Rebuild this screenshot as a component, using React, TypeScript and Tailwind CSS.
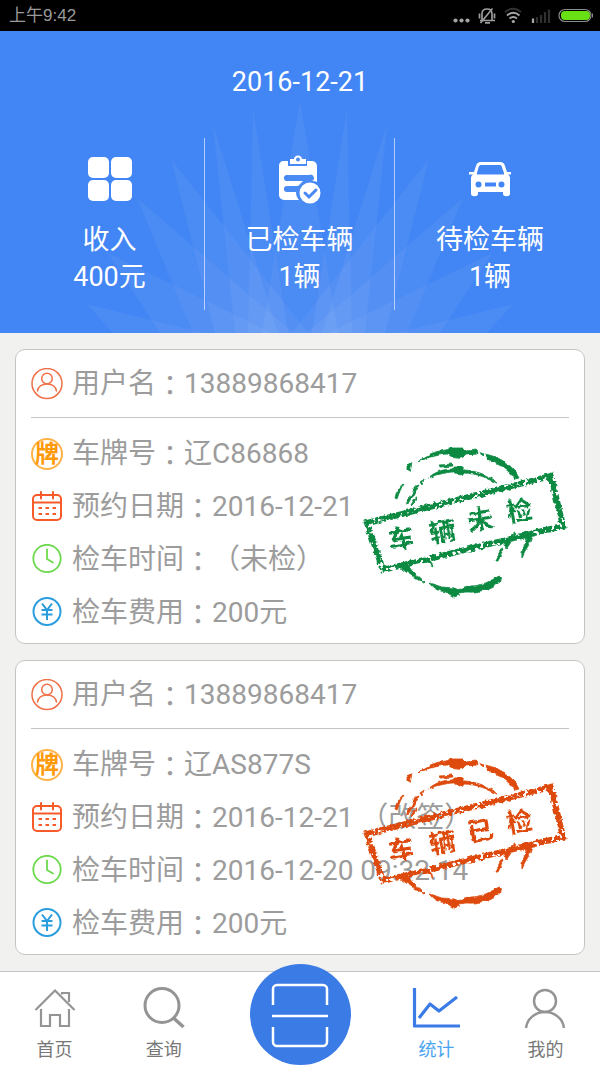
import type { ReactNode } from "react";

type Inspection = {
  id: string;
  phone: string;
  plate: string;
  bookedFor: string;
  inspectedAt: string;
  fee: string;
  stampText: string;
  stampClass: string;
};

const inspections: Inspection[] = [
  {
    id: "c86868",
    phone: "13889868417",
    plate: "辽C86868",
    bookedFor: "2016-12-21",
    inspectedAt: "（未检）",
    fee: "200元",
    stampText: "车辆未检",
    stampClass: "text-[#0d8a43]",
  },
  {
    id: "as877s",
    phone: "13889868417",
    plate: "辽AS877S",
    bookedFor: "2016-12-21 （改签）",
    inspectedAt: "2016-12-20 09:32:14",
    fee: "200元",
    stampText: "车辆已检",
    stampClass: "text-[#de4a0a]",
  },
];

function StatusBar() {
  return (
    <div className="flex h-[31px] items-center justify-between bg-black pl-[9px] text-[#9a9a9a]">
      <span className="font-['Liberation_Sans','Noto_Sans_CJK_SC',sans-serif] text-[17px] leading-6">上午9:42</span>
      <svg width="147" height="24" viewBox="0 0 147 24" fill="none" aria-hidden>
        <g fill="#a3a3a3">
          <circle cx="2.500" cy="16.500" r="2.100" />
          <circle cx="8.500" cy="16.500" r="2.100" />
          <circle cx="14.500" cy="16.500" r="2.100" />
        </g>
        <g stroke="#9c9c9c" strokeWidth="1.700">
          <path d="M27 16.500h15M29 16v-6c0-3 2-5 5-5s5 2 5 5v6M27.500 19 39.500 4.500M32 18.800h5" />
          <path d="M26.500 9.500v5M41.500 9.500v5" />
        </g>
        <g strokeWidth="1.800">
          <path d="M52 8c5-4 11-4 16 0" stroke="#333" />
          <path d="M54 11.500c4-3.500 8.500-3.500 12.500 0M56.500 14.500c2.500-2 5-2 7.500 0" stroke="#a8a8a8" />
          <circle cx="60.300" cy="17.500" r="1.600" fill="#a8a8a8" />
        </g>
        <path d="M80 14.500v4.500" stroke="#a8a8a8" strokeWidth="2.200" />
        <path d="M84 13v6M88 11v8M92 8v11M96 5.500V19" stroke="#303030" strokeWidth="2.200" />
        <rect x="106" y="5.500" width="32" height="12" rx="6" stroke="#8a8a8a" strokeWidth="1.200" />
        <rect x="108" y="7" width="29" height="9" rx="4" fill="#69e015" />
        <path d="M139.500 9.500v4" stroke="#8a8a8a" />
      </svg>
    </div>
  );
}

function Rays() {
  const half = (
    <>
      <path d="M168 8 163 233h40z" />
      <path d="M128 24 150 233h43z" />
      <path d="M86 59 130 233h93z" />
      <path d="M52 98 108 233h100z" />
      <path d="M23 153 75 233h112z" />
      <path d="M2 204 28 233h90z" />
    </>
  );

  return (
    <svg
      className="absolute bottom-0 left-1/2 -translate-x-1/2"
      width="430"
      height="233"
      viewBox="0 0 430 233"
      fill="#fff"
      fillOpacity=".05"
      aria-hidden
    >
      <path d="M215 0 177 233h76z" />
      {half}
      <g transform="matrix(-1 0 0 1 430 0)">{half}</g>
    </svg>
  );
}

function GridIcon() {
  return (
    <svg width="48" height="48" viewBox="0 0 48 48" fill="#fff" aria-hidden>
      <rect x="2" y="1" width="21" height="21" rx="5" />
      <rect x="25" y="1" width="21" height="21" rx="5" />
      <rect x="2" y="24" width="21" height="21" rx="5" />
      <rect x="25" y="24" width="21" height="21" rx="5" />
    </svg>
  );
}

function ClipboardIcon() {
  return (
    <svg className="overflow-visible" width="48" height="48" viewBox="0 0 48 48" aria-hidden>
      <path
        fill="#fff"
        fillRule="evenodd"
        d="M7 5h5v5h19V5h5a5 5 0 0 1 5 5v16a13 13 0 0 0-5-1 3 3 0 0 0-3-6H11a3 3 0 0 0 0 6h16l-5 5H11a2.500 2.500 0 0 0 0 6h9c0 3 1 6 3 8H8a5 5 0 0 1-5-5V10a5 5 0 0 1 4-5z"
      />
      <path
        fill="#fff"
        fillRule="evenodd"
        d="M14 8V3h4c0-2 2-3.500 4-3.500S26 1 26 3h4v5zm8-6.500a2 2 0 1 0 0 4 2 2 0 0 0 0-4z"
      />
      <circle cx="34" cy="37" r="10.500" fill="#fff" />
      <path d="m29 37 4 4 7-7" fill="none" stroke="#4788f4" strokeWidth="3" strokeLinecap="round" />
    </svg>
  );
}

function CarIcon() {
  return (
    <svg width="48" height="48" viewBox="0 0 48 48" aria-hidden>
      <path
        fill="#fff"
        fillRule="evenodd"
        d="M15 6h19c3 0 4 1 5 4l2 6h4v2.500h-3c1.500 1 2 2 2 4V38c0 3-7 3-7 0v-2H12v2c0 3-7 3-7 0V22.500c0-2 .5-3 2-4H3V16h5l2-6c1-3 2-4 5-4zm1 3c-2 0-3 .5-3.500 2.500L11 17c-.3 1 0 1.500 1 1.500h25c1 0 1.300-.5 1-1.500l-2-5.500C35.500 9.500 35 9 33 9zM12.500 25.500a3 3 0 1 0 0 6 3 3 0 0 0 0-6zm23 0a3 3 0 1 0 0 6 3 3 0 0 0 0-6zM19 26.500v4h11v-4z"
      />
    </svg>
  );
}

function Stat({ icon, label, value }: { icon: ReactNode; label: string; value: string }) {
  return (
    <div className="flex flex-col items-center pt-[18px] pb-[14px] text-[27px] leading-[37px]">
      {icon}
      <p className="mt-[18px]">{label}</p>
      <p>{value}</p>
    </div>
  );
}

function Summary() {
  return (
    <header className="relative bg-[#4285f4] px-[15px] pt-[33px] pb-[23px] text-white">
      <Rays />
      <div className="relative">
        <h1 className="mb-[37px] text-center text-[27px] leading-[37px]">2016-12-21</h1>
        <div className="grid grid-cols-3 divide-x divide-white/60">
          <Stat icon={<GridIcon />} label="收入" value="400元" />
          <Stat icon={<ClipboardIcon />} label="已检车辆" value="1辆" />
          <Stat icon={<CarIcon />} label="待检车辆" value="1辆" />
        </div>
      </div>
    </header>
  );
}

function UserIcon() {
  return (
    <svg width="32" height="32" viewBox="0 0 32 32" fill="none" stroke="#f07048" strokeWidth="1.500" aria-hidden>
      <circle cx="16" cy="15.500" r="15" />
      <circle cx="16" cy="10.500" r="5.300" />
      <path d="M6.500 23c1-5 5-7 9.500-7s8.500 2 9.500 7" strokeLinecap="round" />
    </svg>
  );
}

function PlateIcon() {
  return (
    <span
      className="flex size-8 items-center justify-center rounded-full border-2 border-[#ffb347] text-[24px] leading-none font-bold text-[#ff9a0a]"
      aria-hidden
    >
      牌
    </span>
  );
}

function CalendarIcon() {
  return (
    <svg width="32" height="32" viewBox="0 0 32 32" fill="none" stroke="#f85a2a" strokeWidth="2" aria-hidden>
      <rect x="2" y="4" width="28" height="25" rx="4" />
      <path d="M2 11.500h28" />
      <path d="M10 1v6.500M22 1v6.500" strokeLinecap="round" />
      <path d="M7.500 17h3.500M14.500 17H18M21.500 17H25M7.500 23h3.500M14.500 23H18M21.500 23H25" />
    </svg>
  );
}

function ClockIcon() {
  return (
    <svg width="32" height="32" viewBox="0 0 32 32" fill="none" stroke="#6cd94c" strokeWidth="1.800" aria-hidden>
      <circle cx="16" cy="14.500" r="13.700" />
      <path d="M16 5.500V15l6 3.500" strokeLinecap="round" />
    </svg>
  );
}

function YuanIcon() {
  return (
    <svg width="32" height="32" viewBox="0 0 32 32" fill="none" stroke="#2a9ddf" strokeWidth="2" aria-hidden>
      <circle cx="16" cy="14.500" r="13.500" />
      <path d="m11 6.500 5 6.500 5-6.500M16 13v10M10.500 13h11M10.500 17.500h11" />
    </svg>
  );
}

function Field({ icon, label, value }: { icon: ReactNode; label: string; value: string }) {
  return (
    <>
      {icon}
      <span className="flex pt-px whitespace-nowrap">
        {label}
        <span className="font-['Noto_Sans_CJK_TC',sans-serif]">：</span>
        {value}
      </span>
    </>
  );
}

function Stamp({ id, text, className }: { id: string; text: string; className: string }) {
  const inkId = `ink-${id}`;
  const roughId = `rough-${id}`;
  const spots = [
    [47, 113],
    [88, 106],
    [126, 94],
    [165, 85],
  ];

  return (
    <svg
      className={`pointer-events-none absolute top-[85px] right-2 ${className}`}
      width="220"
      height="170"
      viewBox="0 0 220 170"
      role="img"
      aria-label={text}
    >
      <defs>
        <filter id={inkId} x="-5%" y="-5%" width="110%" height="110%">
          <feTurbulence type="fractalNoise" baseFrequency=".25" numOctaves="2" seed="7" result="noise" />
          <feDisplacementMap in="SourceGraphic" in2="noise" scale="4" xChannelSelector="R" yChannelSelector="G" result="rough" />
          <feColorMatrix in="noise" type="matrix" values="0 0 0 0 0  0 0 0 0 0  0 0 0 0 0  0 0 -14 0 9.400" result="holes" />
          <feComposite in="rough" in2="holes" operator="in" />
        </filter>
        <filter id={roughId} x="-5%" y="-5%" width="110%" height="110%">
          <feTurbulence type="fractalNoise" baseFrequency=".16" numOctaves="2" seed="3" result="noise" />
          <feDisplacementMap in="SourceGraphic" in2="noise" scale="4" xChannelSelector="R" yChannelSelector="G" />
        </filter>
      </defs>
      <path
        d="m11 88 184-47 12 50-180 44z"
        fill="none"
        stroke="currentColor"
        strokeWidth="6"
        filter={`url(#${inkId})`}
      />
      <g fill="currentColor" stroke="currentColor" strokeWidth=".8" filter={`url(#${roughId})`}>
        <g fontSize="26" fontWeight="700" textAnchor="middle" stroke="none">
          {text.split("").map((char, i) => (
            <text key={char} x={spots[i][0]} y={spots[i][1]} transform={`rotate(-10 ${spots[i][0]} ${spots[i][1]})`}>
              {char}
            </text>
          ))}
        </g>
        <path d="M62 27c8-7 17-11 28-12l3-2h14l3 3 11-1 1 4-13 1c-3 5-11 4-16-1-11 0-20 3-31 8z" />
        <path d="m124 17 4 2-2 2zM129 19c15 3 28 11 34 24l-4 1c-6-9-16-15-27-19z" />
        <path d="m51 31 5-3-2 9-3-2zM39 63c1-6 4-11 9-15-3 5-5 10-7 16z" />
        <path d="M72 43c7-6 15-9 24-9l3-2h8l1 3c13 1 25 5 34 13-10-4-20-10-35-10-2 3-8 2-9-1-9 0-17 3-26 6zM84 30l12-1 1 2-12 1z" />
        <path d="m64 47 4-3-2 6zM50 69l10-18 3-1-10 18zM55 70l6-10-2 6z" />
        <path d="M41 131c6-2 12-1 14 2 3 6 8 9 13 14-9-3-17-10-27-16zM67 123c5 1 8 4 10 8l-9-5z" />
        <path d="m73 148 13 4 12 1c5 3 12 0 17-2 11 0 19-5 28-10l3 1-2 5c-10 7-21 11-33 10l-9 1 2 2-6 2-8-5-5-1c-5-1-9-4-12-8z" />
        <path d="m139 126 5-10 4-2-6 12zM148 108l7-8 5-2-10 15zM166 99l10-1c0 6-3 12-7 18l-3 6c-1-7 3-11 4-17z" />
      </g>
    </svg>
  );
}

function InspectionCard({ item }: { item: Inspection }) {
  return (
    <article className="relative rounded-[10px] border border-[#c4c4c4] bg-white px-[15px] pb-1 text-[28px] leading-9 text-[#9c9c9c]">
      <div className="flex h-[68px] items-center gap-[9px] border-b border-[#c4c4c4]">
        <Field icon={<UserIcon />} label="用户名" value={item.phone} />
      </div>
      <ul className="pt-[9px]">
        <li className="flex h-[53px] items-center gap-[9px]">
          <Field icon={<PlateIcon />} label="车牌号" value={item.plate} />
        </li>
        <li className="flex h-[53px] items-center gap-[9px]">
          <Field icon={<CalendarIcon />} label="预约日期" value={item.bookedFor} />
        </li>
        <li className="flex h-[53px] items-center gap-[9px]">
          <Field icon={<ClockIcon />} label="检车时间" value={item.inspectedAt} />
        </li>
        <li className="flex h-[53px] items-center gap-[9px]">
          <Field icon={<YuanIcon />} label="检车费用" value={item.fee} />
        </li>
      </ul>
      <Stamp id={item.id} text={item.stampText} className={item.stampClass} />
    </article>
  );
}

function Tab({ label, active, children }: { label: string; active?: boolean; children: ReactNode }) {
  return (
    <a
      href="#"
      aria-current={active ? "page" : undefined}
      className={`flex flex-2 flex-col items-center pt-3 text-[18px] leading-7 ${active ? "text-[#4aa3ef]" : "text-[#777]"}`}
    >
      <svg width="48" height="48" viewBox="0 0 48 48" fill="none" stroke={active ? "#3b7be8" : "#949494"} aria-hidden>
        {children}
      </svg>
      <span className="mt-1">{label}</span>
    </a>
  );
}

function TabBar() {
  return (
    <nav className="flex border-t border-[#c4c4c4] bg-white">
      <Tab label="首页">
        <path d="M4.500 26 24 6.500 43.500 26M31 10.500V9h7v9" strokeWidth="2.200" />
        <path d="M10 25v17h9V31h10v11h9V25" strokeWidth="2.200" />
      </Tab>
      <Tab label="查询">
        <circle cx="22" cy="21.500" r="17" strokeWidth="3" />
        <path d="m33.500 34 10 9" strokeWidth="3.500" />
      </Tab>
      <div className="flex flex-3 justify-center">
        <button
          type="button"
          aria-label="扫一扫"
          className="-mt-2 mb-[2px] flex size-[101px] items-center justify-center rounded-full bg-[#3b7be6]"
        >
          <svg width="60" height="66" viewBox="0 0 60 66" fill="none" stroke="#fff" strokeWidth="2.500" aria-hidden>
            <path d="M3 23V7a4 4 0 0 1 4-4h46a4 4 0 0 1 4 4v16M3 45v15a4 4 0 0 0 4 4h46a4 4 0 0 0 4-4V45M2 34h56" />
          </svg>
        </button>
      </div>
      <Tab label="统计" active>
        <g strokeWidth="3.200" strokeLinejoin="round">
          <path d="M2.500 4v38H48" />
          <path d="m7 34 11-14 9 7 18-14" />
        </g>
      </Tab>
      <Tab label="我的">
        <g strokeWidth="2.500">
          <circle cx="24" cy="17" r="11" />
          <path d="M5 44c1-9 9-16 19-16s18 7 19 16" />
        </g>
      </Tab>
    </nav>
  );
}

export default function App() {
  return (
    <div className="flex min-h-screen flex-col bg-[#f1f1ef] font-['Roboto','Noto_Sans_CJK_SC',sans-serif]">
      <StatusBar />
      <Summary />
      <main className="flex flex-1 flex-col gap-4 px-[15px] py-4">
        {inspections.map((item) => (
          <InspectionCard key={item.id} item={item} />
        ))}
      </main>
      <TabBar />
    </div>
  );
}
